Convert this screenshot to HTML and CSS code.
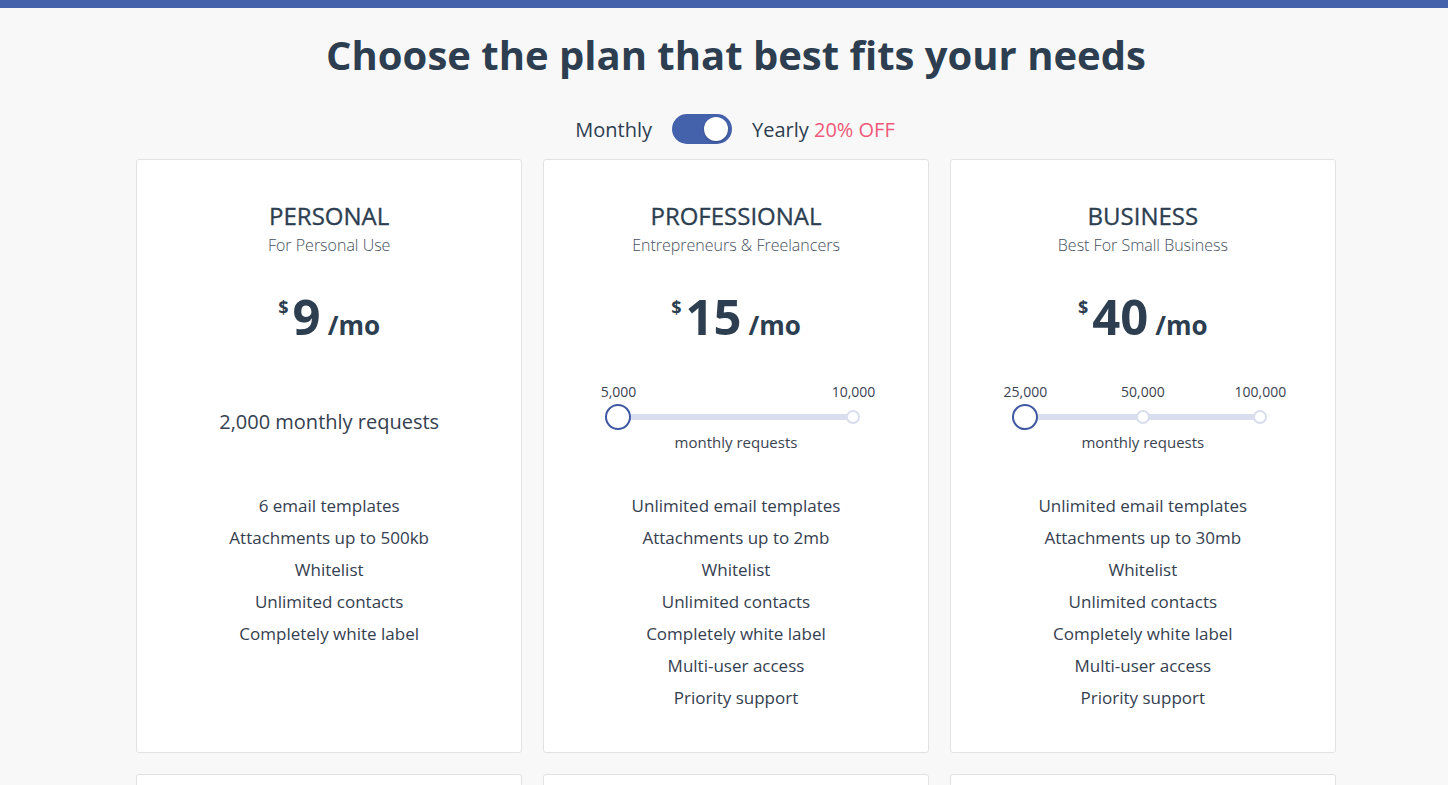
FILE: index.html
```html
<!DOCTYPE html>
<html lang="en">
<head>
<meta charset="utf-8">
<title>Pricing</title>
<link rel="stylesheet" href="styles.css">
</head>
<body>
<div class="topbar"></div>
<main class="page">
  <h1 class="headline">Choose the plan that best fits your needs</h1>
  <div class="billing">
    <span class="billing-label">Monthly</span>
    <span class="switch"><span class="switch-knob"></span></span>
    <span class="billing-label">Yearly <span class="discount">20% OFF</span></span>
  </div>

  <div class="plans">
    <section class="card">
      <h2 class="plan-name">PERSONAL</h2>
      <p class="plan-sub">For Personal Use</p>
      <div class="price"><span class="cur">$</span><span class="amount">9</span><span class="per">/mo</span></div>
      <div class="usage usage-fixed">2,000 monthly requests</div>
      <ul class="features">
        <li>6 email templates</li>
        <li>Attachments up to 500kb</li>
        <li>Whitelist</li>
        <li>Unlimited contacts</li>
        <li>Completely white label</li>
      </ul>
    </section>

    <section class="card">
      <h2 class="plan-name">PROFESSIONAL</h2>
      <p class="plan-sub">Entrepreneurs &amp; Freelancers</p>
      <div class="price"><span class="cur">$</span><span class="amount">15</span><span class="per">/mo</span></div>
      <div class="usage">
        <div class="slider">
          <span class="tick-label" style="left:0%">5,000</span>
          <span class="tick-label" style="left:100%">10,000</span>
          <span class="track"></span>
          <span class="dot" style="left:100%"></span>
          <span class="handle" style="left:0%"></span>
        </div>
        <div class="usage-caption">monthly requests</div>
      </div>
      <ul class="features">
        <li>Unlimited email templates</li>
        <li>Attachments up to 2mb</li>
        <li>Whitelist</li>
        <li>Unlimited contacts</li>
        <li>Completely white label</li>
        <li>Multi-user access</li>
        <li>Priority support</li>
      </ul>
    </section>

    <section class="card">
      <h2 class="plan-name">BUSINESS</h2>
      <p class="plan-sub">Best For Small Business</p>
      <div class="price"><span class="cur">$</span><span class="amount">40</span><span class="per">/mo</span></div>
      <div class="usage">
        <div class="slider">
          <span class="tick-label" style="left:0%">25,000</span>
          <span class="tick-label" style="left:50%">50,000</span>
          <span class="tick-label" style="left:100%">100,000</span>
          <span class="track"></span>
          <span class="dot" style="left:50%"></span>
          <span class="dot" style="left:100%"></span>
          <span class="handle" style="left:0%"></span>
        </div>
        <div class="usage-caption">monthly requests</div>
      </div>
      <ul class="features">
        <li>Unlimited email templates</li>
        <li>Attachments up to 30mb</li>
        <li>Whitelist</li>
        <li>Unlimited contacts</li>
        <li>Completely white label</li>
        <li>Multi-user access</li>
        <li>Priority support</li>
      </ul>
    </section>

    <section class="card card-more"></section>
    <section class="card card-more"></section>
    <section class="card card-more"></section>
  </div>
</main>
</body>
</html>
```

FILE: styles.css
```css
* { box-sizing: border-box; }

html, body {
  margin: 0;
  padding: 0;
  background: #f8f8f8;
  font-family: "Open Sans", "Noto Sans", "Liberation Sans", sans-serif;
  color: #2c3e50;
}

.topbar {
  height: 8px;
  background: #4461ab;
}

.page {
  padding-left: 24px;
  display: flex;
  flex-direction: column;
  align-items: center;
}

.headline {
  margin: 19px 0 0;
  font-size: 40px;
  line-height: 56px;
  font-weight: 700;
  color: #2c3e50;
}

.billing {
  margin-top: 31px;
  display: flex;
  align-items: center;
  gap: 20px;
  height: 30px;
  padding-right: 2px;
}

.billing-label {
  font-size: 20px;
  color: #2c3e50;
}

.discount {
  color: #f0587a;
}

.switch {
  position: relative;
  width: 60px;
  height: 30px;
  border-radius: 15px;
  background: #4461ab;
}

.switch-knob {
  position: absolute;
  top: 3px;
  right: 4px;
  width: 24px;
  height: 24px;
  border-radius: 50%;
  background: #fff;
  box-shadow: 0 1px 2px rgba(0,0,0,0.25);
}

.plans {
  margin-top: 15px;
  width: 1200px;
  display: grid;
  grid-template-columns: repeat(3, 1fr);
  column-gap: 20.5px;
  row-gap: 21px;
}

.card {
  background: #fff;
  border: 1px solid #e2e2e2;
  border-radius: 3px;
  padding: 41px 20px 38px;
  display: flex;
  flex-direction: column;
  align-items: center;
  text-align: center;
}

.card-more {
  min-height: 200px;
}

.plan-name {
  margin: 0;
  font-size: 24px;
  line-height: 30px;
  font-weight: 400;
  color: #2c3e50;
  -webkit-text-stroke: 0.3px #2c3e50;
}

.plan-sub {
  margin: 3px 0 0;
  font-size: 16px;
  line-height: 22px;
  font-weight: 300;
  color: #46505e;
}

.price {
  margin-top: 30px;
  display: flex;
  align-items: baseline;
  height: 60px;
  line-height: 60px;
  color: #2c3e50;
  font-weight: 700;
}

.cur {
  font-size: 18px;
  align-self: flex-start;
  line-height: 1;
  margin-top: 12px;
  margin-right: 4px;
}

.amount {
  font-size: 49px;
}

.per {
  font-size: 26px;
  margin-left: 7px;
}

.usage {
  margin-top: 36px;
  height: 71px;
  display: flex;
  flex-direction: column;
  align-items: center;
}

.usage-fixed {
  justify-content: center;
  padding-top: 7px;
  font-size: 20px;
  color: #34404f;
}

.slider {
  position: relative;
  width: 235px;
  height: 48px;
}

.tick-label {
  position: absolute;
  top: 0;
  transform: translateX(-50%);
  font-size: 14px;
  line-height: 20px;
  color: #3a4350;
  white-space: nowrap;
}

.track {
  position: absolute;
  left: 0;
  right: 0;
  top: 32px;
  height: 6px;
  border-radius: 3px;
  background: #d9deee;
}

.dot {
  position: absolute;
  top: 28px;
  width: 14px;
  height: 14px;
  margin-left: -7px;
  border-radius: 50%;
  background: #fff;
  border: 2px solid #d9deee;
}

.handle {
  position: absolute;
  top: 22px;
  width: 26px;
  height: 26px;
  margin-left: -13px;
  border-radius: 50%;
  background: #fff;
  border: 2.5px solid #3f58a1;
}

.usage-caption {
  margin-top: 3px;
  font-size: 15px;
  line-height: 22px;
  color: #3a4350;
}

.features {
  list-style: none;
  margin: 37px 0 0;
  padding: 0;
}

.features li {
  font-size: 17px;
  line-height: 32px;
  color: #34404f;
}
```
